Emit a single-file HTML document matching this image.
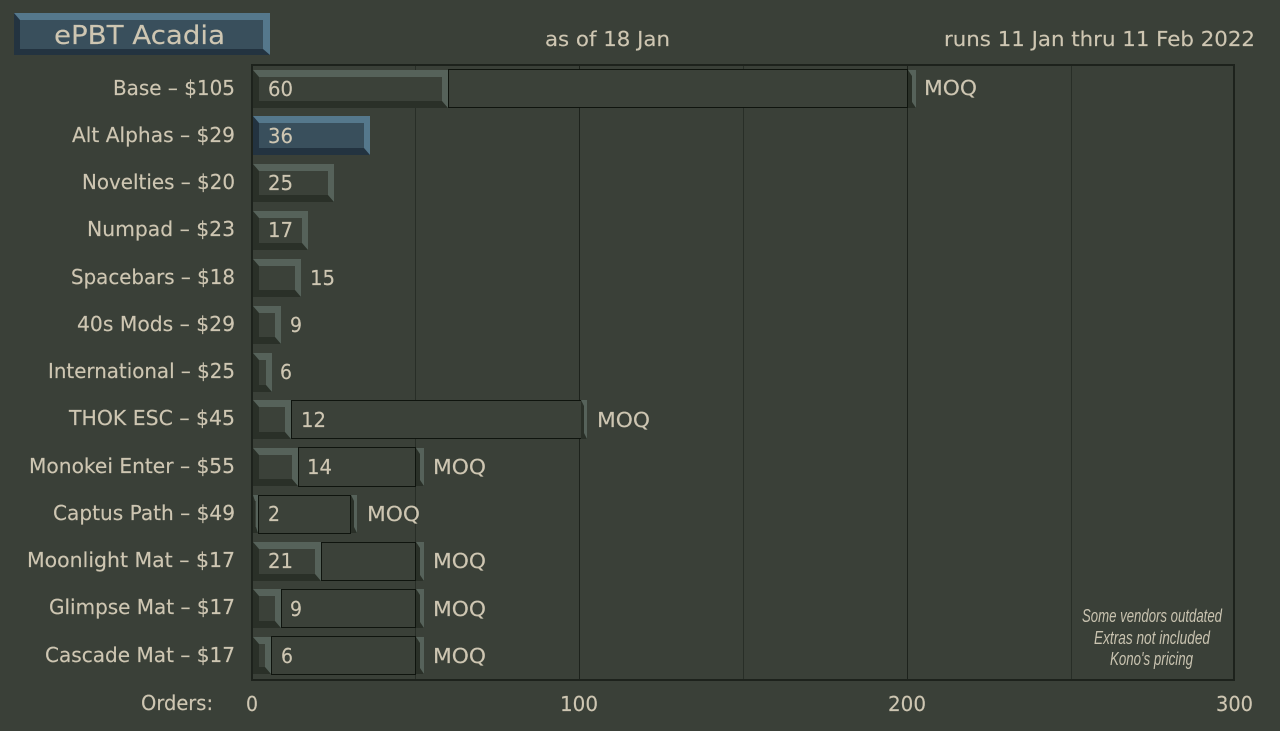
<!DOCTYPE html>
<html><head><meta charset="utf-8"><title>ePBT Acadia</title>
<style>
html,body{margin:0;padding:0;background:#3a4038;width:1280px;height:731px;overflow:hidden}
#c{position:relative;width:1280px;height:731px;overflow:hidden}
#c div{position:absolute;box-sizing:border-box}
.p{left:251px;top:64px;width:984px;height:617px;border:2px solid #1d221c}
.g{top:65px;height:615px;width:1px;background:#282e27}
.h{background:#1d221c}
.o{background:#3b4139;border:1px solid #0f140e}
.b{background:#3b4139;border-style:solid;border-width:7px 6px 7px 6px;border-color:#56625a #56625a #2a3028 #2a3028}
.m{width:8px;border-style:solid;border-width:6px 4px;border-color:#56625a #56625a #2a3028 #2a3028}
.blue{background:#394f5c;border-color:#55788c #55788c #233340 #233340}
svg{position:absolute;left:0;top:0}
text{font-family:"DejaVu Sans","Liberation Sans",sans-serif;font-size:20px;fill:#cec6b2;stroke:#cec6b2;stroke-width:.15px}
.t{font-size:26px}
.n{font-family:"Liberation Sans",sans-serif;font-style:italic;font-size:18px;fill:#c9c3b0;stroke:none}
</style></head><body><div id="c">
<div class="blue b" style="left:14px;top:13px;width:256px;height:42px;border-width:7px 7px 6px 6px"></div>
<div class="g" style="left:415px"></div><div class="g h" style="left:579px"></div><div class="g" style="left:743px"></div><div class="g h" style="left:907px"></div><div class="g" style="left:1071px"></div>
<div class="p"></div>

<div class="o" style="left:448px;top:69px;width:460px;height:39px"></div><div class="m" style="left:908px;top:70px;height:38px"></div>
<div class="b" style="left:253px;top:70px;width:195px;height:38px"></div>
<div class="b blue" style="left:253px;top:116px;width:117px;height:39px"></div>
<div class="b" style="left:253px;top:164px;width:81px;height:38px"></div>
<div class="b" style="left:253px;top:211px;width:55px;height:39px"></div>
<div class="b" style="left:253px;top:259px;width:48px;height:38px"></div>
<div class="b" style="left:253px;top:306px;width:28px;height:38px"></div>
<div class="b" style="left:253px;top:353px;width:19px;height:39px"></div>
<div class="o" style="left:291px;top:400px;width:291px;height:39px"></div><div class="m" style="left:581px;top:400px;width:6px;height:39px;border-width:6px 3px"></div>
<div class="b" style="left:253px;top:400px;width:38px;height:39px"></div>
<div class="o" style="left:298px;top:447px;width:118px;height:40px"></div><div class="m" style="left:416px;top:448px;height:38px"></div>
<div class="b" style="left:253px;top:448px;width:45px;height:38px"></div>
<div class="o" style="left:258px;top:495px;width:93px;height:39px"></div><div class="m" style="left:351px;top:495px;width:6px;height:38px;border-width:6px 3px"></div>
<div class="b" style="left:253px;top:495px;width:5px;height:38px;border-width:6px 2px"></div>
<div class="o" style="left:321px;top:542px;width:95px;height:39px"></div><div class="m" style="left:416px;top:542px;height:39px"></div>
<div class="b" style="left:253px;top:542px;width:68px;height:39px"></div>
<div class="o" style="left:281px;top:589px;width:135px;height:39px"></div><div class="m" style="left:416px;top:589px;height:39px"></div>
<div class="b" style="left:253px;top:589px;width:28px;height:39px"></div>
<div class="o" style="left:271px;top:636px;width:145px;height:39px"></div><div class="m" style="left:416px;top:637px;height:37px"></div>
<div class="b" style="left:253px;top:637px;width:18px;height:37px"></div>

<svg width="1280" height="731" viewBox="0 0 1280 731" xmlns="http://www.w3.org/2000/svg">
<text class="t" x="54" y="44" textLength="171" lengthAdjust="spacingAndGlyphs">ePBT Acadia</text>
<text x="545" y="46" textLength="125" lengthAdjust="spacingAndGlyphs">as of 18 Jan</text>
<text x="944" y="46" textLength="311" lengthAdjust="spacingAndGlyphs">runs 11 Jan thru 11 Feb 2022</text>

<text x="113" y="95" textLength="122" lengthAdjust="spacingAndGlyphs">Base – $105</text>
<text x="72" y="142" textLength="163" lengthAdjust="spacingAndGlyphs">Alt Alphas – $29</text>
<text x="82" y="189" textLength="153" lengthAdjust="spacingAndGlyphs">Novelties – $20</text>
<text x="87" y="236" textLength="148" lengthAdjust="spacingAndGlyphs">Numpad – $23</text>
<text x="71" y="284" textLength="164" lengthAdjust="spacingAndGlyphs">Spacebars – $18</text>
<text x="77" y="331" textLength="158" lengthAdjust="spacingAndGlyphs">40s Mods – $29</text>
<text x="48" y="378" textLength="187" lengthAdjust="spacingAndGlyphs">International – $25</text>
<text x="69" y="425" textLength="166" lengthAdjust="spacingAndGlyphs">THOK ESC – $45</text>
<text x="29" y="473" textLength="206" lengthAdjust="spacingAndGlyphs">Monokei Enter – $55</text>
<text x="53" y="520" textLength="182" lengthAdjust="spacingAndGlyphs">Captus Path – $49</text>
<text x="27" y="567" textLength="208" lengthAdjust="spacingAndGlyphs">Moonlight Mat – $17</text>
<text x="49" y="614" textLength="186" lengthAdjust="spacingAndGlyphs">Glimpse Mat – $17</text>
<text x="45" y="662" textLength="190" lengthAdjust="spacingAndGlyphs">Cascade Mat – $17</text>

<text x="268" y="96" textLength="25" lengthAdjust="spacingAndGlyphs">60</text>
<text x="268" y="143" textLength="25" lengthAdjust="spacingAndGlyphs">36</text>
<text x="268" y="190" textLength="25" lengthAdjust="spacingAndGlyphs">25</text>
<text x="268" y="237" textLength="25" lengthAdjust="spacingAndGlyphs">17</text>
<text x="310" y="285" textLength="25" lengthAdjust="spacingAndGlyphs">15</text>
<text x="290" y="332" textLength="12" lengthAdjust="spacingAndGlyphs">9</text>
<text x="280" y="379" textLength="12" lengthAdjust="spacingAndGlyphs">6</text>
<text x="301" y="427" textLength="25" lengthAdjust="spacingAndGlyphs">12</text>
<text x="307" y="474" textLength="25" lengthAdjust="spacingAndGlyphs">14</text>
<text x="268" y="521" textLength="12" lengthAdjust="spacingAndGlyphs">2</text>
<text x="268" y="568" textLength="25" lengthAdjust="spacingAndGlyphs">21</text>
<text x="290" y="616" textLength="12" lengthAdjust="spacingAndGlyphs">9</text>
<text x="281" y="663" textLength="12" lengthAdjust="spacingAndGlyphs">6</text>

<text x="924" y="95" textLength="53" lengthAdjust="spacingAndGlyphs">MOQ</text>
<text x="597" y="427" textLength="53" lengthAdjust="spacingAndGlyphs">MOQ</text>
<text x="433" y="474" textLength="53" lengthAdjust="spacingAndGlyphs">MOQ</text>
<text x="367" y="521" textLength="53" lengthAdjust="spacingAndGlyphs">MOQ</text>
<text x="433" y="568" textLength="53" lengthAdjust="spacingAndGlyphs">MOQ</text>
<text x="433" y="616" textLength="53" lengthAdjust="spacingAndGlyphs">MOQ</text>
<text x="433" y="663" textLength="53" lengthAdjust="spacingAndGlyphs">MOQ</text>

<text x="141" y="710" textLength="72" lengthAdjust="spacingAndGlyphs">Orders:</text>
<text x="246" y="711" textLength="12" lengthAdjust="spacingAndGlyphs">0</text>
<text x="560" y="711" textLength="38" lengthAdjust="spacingAndGlyphs">100</text>
<text x="888" y="711" textLength="38" lengthAdjust="spacingAndGlyphs">200</text>
<text x="1216" y="711" textLength="37" lengthAdjust="spacingAndGlyphs">300</text>

<text class="n" x="1082" y="622" textLength="140" lengthAdjust="spacingAndGlyphs">Some vendors outdated</text>
<text class="n" x="1094" y="644" textLength="116" lengthAdjust="spacingAndGlyphs">Extras not included</text>
<text class="n" x="1110" y="665" textLength="83" lengthAdjust="spacingAndGlyphs">Kono's pricing</text>
</svg>
</div></body></html>
